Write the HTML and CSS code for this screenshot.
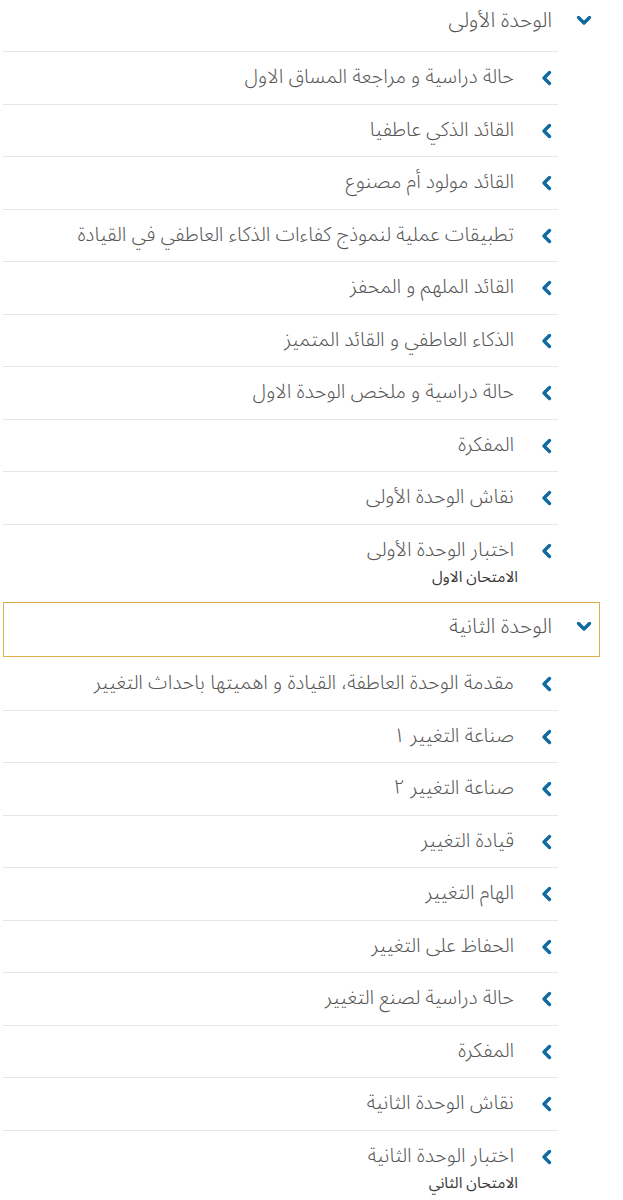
FILE: index.html
```html
<!DOCTYPE html>
<html lang="ar" dir="rtl">
<head>
<meta charset="utf-8">
<link rel="stylesheet" href="styles.css">
</head>
<body>
<div class="accordion">
  <section class="unit">
    <div class="unit-head">
      <svg class="chev-down" viewBox="0 0 16 11" width="16" height="11"><path d="M2.5 2.5 L8 8 L13.5 2.5" fill="none" stroke="currentColor" stroke-width="3.4" stroke-linecap="round" stroke-linejoin="round"/></svg>
      <span class="unit-title">الوحدة الأولى</span>
    </div>
    <ul class="items">
      <li class="item"><svg class="chev" viewBox="0 0 11 16" width="11" height="16"><path d="M8.5 2.5 L3 8 L8.5 13.5" fill="none" stroke="currentColor" stroke-width="3.4" stroke-linecap="round" stroke-linejoin="round"/></svg><div class="item-text"><span class="title">حالة دراسية و مراجعة المساق الاول</span></div></li>
      <li class="item"><svg class="chev" viewBox="0 0 11 16" width="11" height="16"><path d="M8.5 2.5 L3 8 L8.5 13.5" fill="none" stroke="currentColor" stroke-width="3.4" stroke-linecap="round" stroke-linejoin="round"/></svg><div class="item-text"><span class="title">القائد الذكي عاطفيا</span></div></li>
      <li class="item"><svg class="chev" viewBox="0 0 11 16" width="11" height="16"><path d="M8.5 2.5 L3 8 L8.5 13.5" fill="none" stroke="currentColor" stroke-width="3.4" stroke-linecap="round" stroke-linejoin="round"/></svg><div class="item-text"><span class="title">القائد مولود أم مصنوع</span></div></li>
      <li class="item"><svg class="chev" viewBox="0 0 11 16" width="11" height="16"><path d="M8.5 2.5 L3 8 L8.5 13.5" fill="none" stroke="currentColor" stroke-width="3.4" stroke-linecap="round" stroke-linejoin="round"/></svg><div class="item-text"><span class="title">تطبيقات عملية لنموذج كفاءات الذكاء العاطفي في القيادة</span></div></li>
      <li class="item"><svg class="chev" viewBox="0 0 11 16" width="11" height="16"><path d="M8.5 2.5 L3 8 L8.5 13.5" fill="none" stroke="currentColor" stroke-width="3.4" stroke-linecap="round" stroke-linejoin="round"/></svg><div class="item-text"><span class="title">القائد الملهم و المحفز</span></div></li>
      <li class="item"><svg class="chev" viewBox="0 0 11 16" width="11" height="16"><path d="M8.5 2.5 L3 8 L8.5 13.5" fill="none" stroke="currentColor" stroke-width="3.4" stroke-linecap="round" stroke-linejoin="round"/></svg><div class="item-text"><span class="title">الذكاء العاطفي و القائد المتميز</span></div></li>
      <li class="item"><svg class="chev" viewBox="0 0 11 16" width="11" height="16"><path d="M8.5 2.5 L3 8 L8.5 13.5" fill="none" stroke="currentColor" stroke-width="3.4" stroke-linecap="round" stroke-linejoin="round"/></svg><div class="item-text"><span class="title">حالة دراسية و ملخص الوحدة الاول</span></div></li>
      <li class="item"><svg class="chev" viewBox="0 0 11 16" width="11" height="16"><path d="M8.5 2.5 L3 8 L8.5 13.5" fill="none" stroke="currentColor" stroke-width="3.4" stroke-linecap="round" stroke-linejoin="round"/></svg><div class="item-text"><span class="title">المفكرة</span></div></li>
      <li class="item"><svg class="chev" viewBox="0 0 11 16" width="11" height="16"><path d="M8.5 2.5 L3 8 L8.5 13.5" fill="none" stroke="currentColor" stroke-width="3.4" stroke-linecap="round" stroke-linejoin="round"/></svg><div class="item-text"><span class="title">نقاش الوحدة الأولى</span></div></li>
      <li class="item"><svg class="chev" viewBox="0 0 11 16" width="11" height="16"><path d="M8.5 2.5 L3 8 L8.5 13.5" fill="none" stroke="currentColor" stroke-width="3.4" stroke-linecap="round" stroke-linejoin="round"/></svg><div class="item-text"><span class="title">اختبار الوحدة الأولى</span><span class="sub">الامتحان الاول</span></div></li>
    </ul>
  </section>
  <section class="unit focused">
    <div class="unit-head">
      <svg class="chev-down" viewBox="0 0 16 11" width="16" height="11"><path d="M2.5 2.5 L8 8 L13.5 2.5" fill="none" stroke="currentColor" stroke-width="3.4" stroke-linecap="round" stroke-linejoin="round"/></svg>
      <span class="unit-title">الوحدة الثانية</span>
    </div>
    <ul class="items">
      <li class="item"><svg class="chev" viewBox="0 0 11 16" width="11" height="16"><path d="M8.5 2.5 L3 8 L8.5 13.5" fill="none" stroke="currentColor" stroke-width="3.4" stroke-linecap="round" stroke-linejoin="round"/></svg><div class="item-text"><span class="title">مقدمة الوحدة العاطفة، القيادة و اهميتها باحداث التغيير</span></div></li>
      <li class="item"><svg class="chev" viewBox="0 0 11 16" width="11" height="16"><path d="M8.5 2.5 L3 8 L8.5 13.5" fill="none" stroke="currentColor" stroke-width="3.4" stroke-linecap="round" stroke-linejoin="round"/></svg><div class="item-text"><span class="title">صناعة التغيير ١</span></div></li>
      <li class="item"><svg class="chev" viewBox="0 0 11 16" width="11" height="16"><path d="M8.5 2.5 L3 8 L8.5 13.5" fill="none" stroke="currentColor" stroke-width="3.4" stroke-linecap="round" stroke-linejoin="round"/></svg><div class="item-text"><span class="title">صناعة التغيير ٢</span></div></li>
      <li class="item"><svg class="chev" viewBox="0 0 11 16" width="11" height="16"><path d="M8.5 2.5 L3 8 L8.5 13.5" fill="none" stroke="currentColor" stroke-width="3.4" stroke-linecap="round" stroke-linejoin="round"/></svg><div class="item-text"><span class="title">قيادة التغيير</span></div></li>
      <li class="item"><svg class="chev" viewBox="0 0 11 16" width="11" height="16"><path d="M8.5 2.5 L3 8 L8.5 13.5" fill="none" stroke="currentColor" stroke-width="3.4" stroke-linecap="round" stroke-linejoin="round"/></svg><div class="item-text"><span class="title">الهام التغيير</span></div></li>
      <li class="item"><svg class="chev" viewBox="0 0 11 16" width="11" height="16"><path d="M8.5 2.5 L3 8 L8.5 13.5" fill="none" stroke="currentColor" stroke-width="3.4" stroke-linecap="round" stroke-linejoin="round"/></svg><div class="item-text"><span class="title">الحفاظ على التغيير</span></div></li>
      <li class="item"><svg class="chev" viewBox="0 0 11 16" width="11" height="16"><path d="M8.5 2.5 L3 8 L8.5 13.5" fill="none" stroke="currentColor" stroke-width="3.4" stroke-linecap="round" stroke-linejoin="round"/></svg><div class="item-text"><span class="title">حالة دراسية لصنع التغيير</span></div></li>
      <li class="item"><svg class="chev" viewBox="0 0 11 16" width="11" height="16"><path d="M8.5 2.5 L3 8 L8.5 13.5" fill="none" stroke="currentColor" stroke-width="3.4" stroke-linecap="round" stroke-linejoin="round"/></svg><div class="item-text"><span class="title">المفكرة</span></div></li>
      <li class="item"><svg class="chev" viewBox="0 0 11 16" width="11" height="16"><path d="M8.5 2.5 L3 8 L8.5 13.5" fill="none" stroke="currentColor" stroke-width="3.4" stroke-linecap="round" stroke-linejoin="round"/></svg><div class="item-text"><span class="title">نقاش الوحدة الثانية</span></div></li>
      <li class="item"><svg class="chev" viewBox="0 0 11 16" width="11" height="16"><path d="M8.5 2.5 L3 8 L8.5 13.5" fill="none" stroke="currentColor" stroke-width="3.4" stroke-linecap="round" stroke-linejoin="round"/></svg><div class="item-text"><span class="title">اختبار الوحدة الثانية</span><span class="sub">الامتحان الثاني</span></div></li>
    </ul>
  </section>
</div>
</body>
</html>
```

FILE: styles.css
```css
html, body {
  margin: 0;
  padding: 0;
  background: #ffffff;
}
body {
  font-family: "Noto Sans Arabic", "DejaVu Sans", sans-serif;
  color: #555555;
}
.accordion {
  margin: -4px 23px 0 3px;
}
.unit-head {
  display: flex;
  align-items: center;
  gap: 24px;
  height: 53px;
  box-sizing: content-box;
  padding: 0 7px 0 0;
  border: 1px solid transparent;
}
.unit-head > * {
  margin-bottom: 7px;
}
.unit.focused .unit-head {
  border-color: #e2ae4a;
}
.chev-down {
  color: #0e6aa0;
  flex: none;
}
.unit-title {
  font-size: 21px;
  font-weight: 300;
  color: #555555;
}
.items {
  list-style: none;
  margin: 0 42px 0 0;
  padding: 0;
}
.item {
  display: flex;
  align-items: flex-start;
  gap: 27px;
  padding: 14px 6px 14px 0;
  border-top: 1px solid #e6e6e6;
}
.unit.focused .item:first-child {
  border-top-color: transparent;
}
.item .chev {
  color: #0e6aa0;
  flex: none;
  margin-top: 4px;
}
.item-text {
  display: flex;
  flex-direction: column;
}
.title {
  font-size: 20px;
  font-weight: 300;
  line-height: 23.5px;
  color: #555555;
}
.sub {
  font-size: 15.5px;
  font-weight: 400;
  line-height: 22px;
  color: #3a3a3a;
  margin-right: -4px;
  padding-top: 4px;
}
```
